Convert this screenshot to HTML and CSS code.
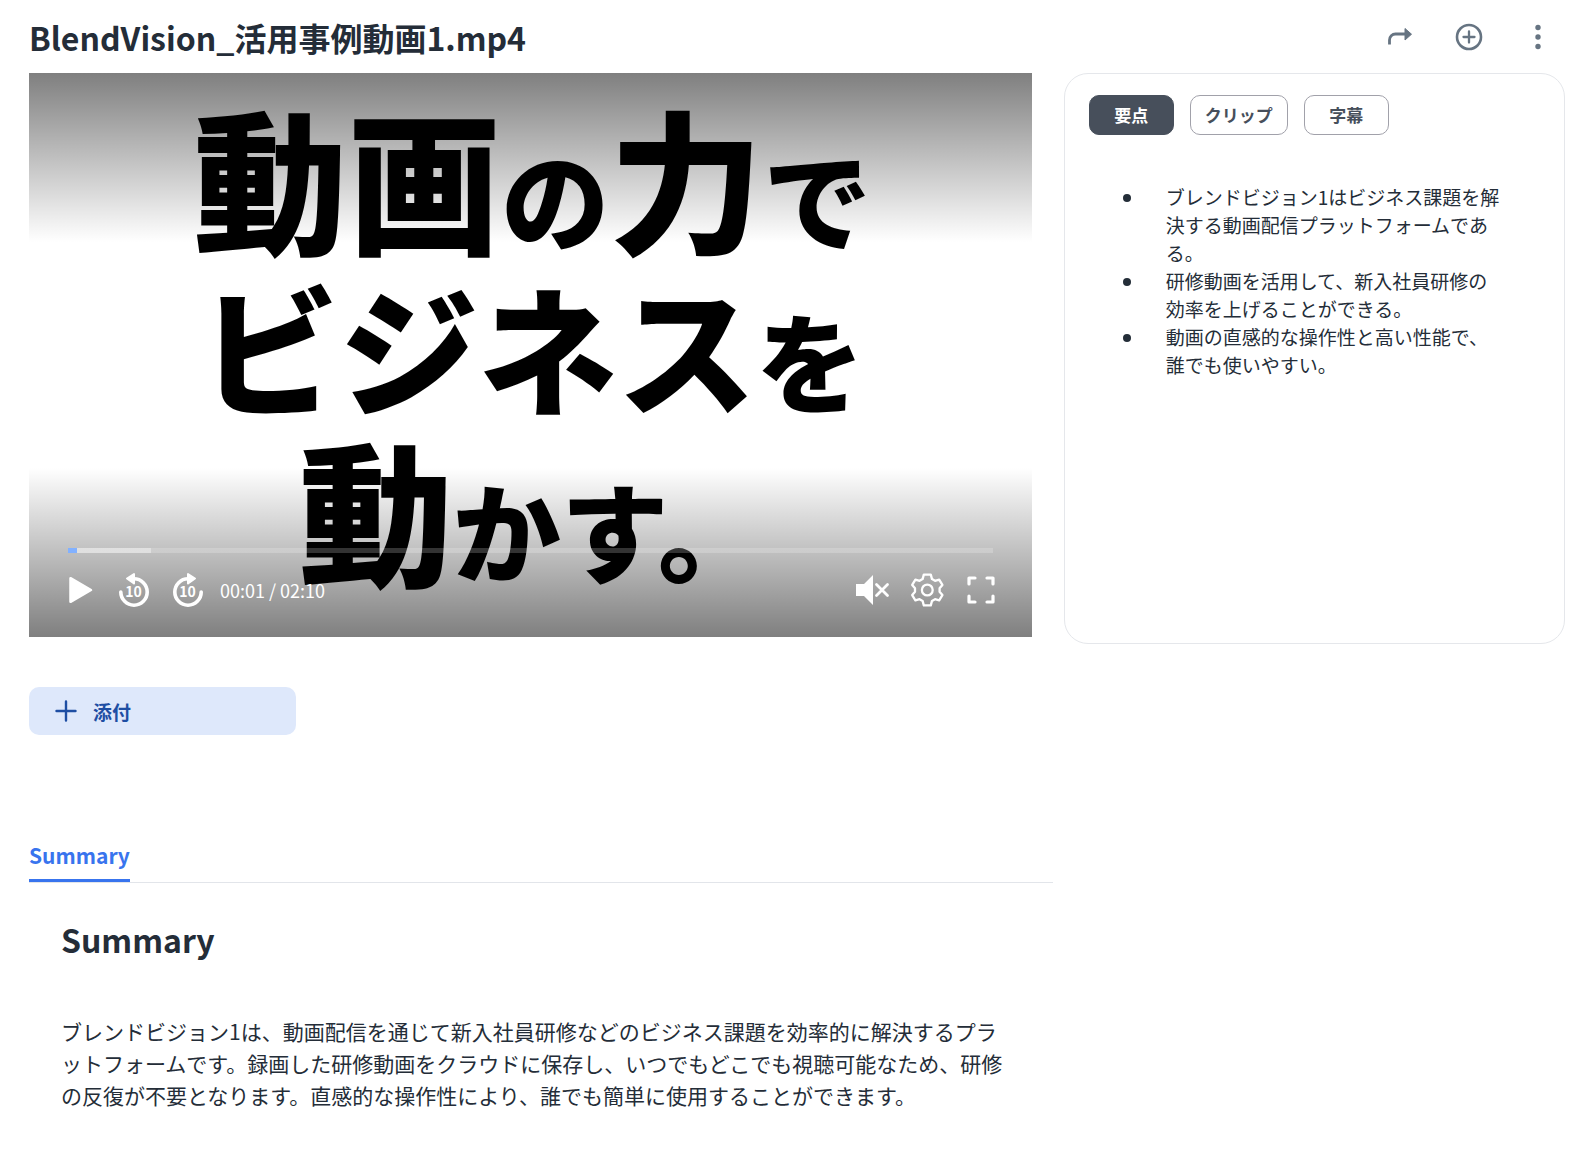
FILE: index.html
```html
<!DOCTYPE html>
<html lang="ja">
<head>
    <meta charset="UTF-8">
    <meta name="viewport" content="width=device-width, initial-scale=1.0">
    <title>BlendVision_活用事例動画1.mp4</title>
    <link rel="stylesheet" href="styles.css">
</head>
<body>

    <header class="page-header">
        <h1>BlendVision_活用事例動画1.mp4</h1>
        <div class="header-actions">
            <button type="button" aria-label="共有">
                <svg width="28" height="28" viewBox="0 0 28 28">
                    <path d="M3.5 21.5V17a6 6 0 0 1 6-6H19" fill="none" stroke="currentColor" stroke-width="2.8"/>
                    <path d="M19 5.5l6.5 5.7L19 17z" fill="currentColor" stroke="currentColor" stroke-width="1" stroke-linejoin="round"/>
                </svg>
            </button>
            <button type="button" aria-label="追加">
                <svg width="28" height="28" viewBox="0 0 28 28" fill="none" stroke="currentColor" stroke-width="2.6">
                    <circle cx="14" cy="14" r="12"/>
                    <path d="M14 8.5v11M8.5 14h11" stroke-linecap="round" stroke-width="2.3"/>
                </svg>
            </button>
            <button type="button" aria-label="メニュー">
                <svg width="28" height="28" viewBox="0 0 28 28" fill="currentColor">
                    <circle cx="14" cy="4.5" r="2.7"/>
                    <circle cx="14" cy="14" r="2.7"/>
                    <circle cx="14" cy="23.5" r="2.7"/>
                </svg>
            </button>
        </div>
    </header>

    <main class="main">
        <div class="player">
            <div class="frame">
                <p class="kanji">動画<span class="small">の</span>力<span class="small">で</span></p>
                <p class="kana">ビジネス<span class="small">を</span></p>
                <p class="kanji">動<span class="small">かす。</span></p>
            </div>
            <div class="controls">
                <input class="seek" type="range" min="0" max="130" value="1" aria-label="再生位置">
                <div class="control-row">
                    <button type="button" aria-label="再生">
                        <svg width="34" height="36" viewBox="0 0 34 36">
                            <path d="M7.5 6.2v23.6L28 18z" fill="#fff" stroke="#fff" stroke-width="2.5" stroke-linejoin="round"/>
                        </svg>
                    </button>
                    <button type="button" aria-label="10秒戻る">
                        <svg width="34" height="36" viewBox="0 0 34 36">
                            <path d="M3.8 20A13.2 13.2 0 1 0 17 6.8" fill="none" stroke="#fff" stroke-width="3.6" stroke-linecap="round"/>
                            <path d="M10 6.5L17 2v9.5z" fill="#fff" stroke="#fff" stroke-width="2" stroke-linejoin="round"/>
                            <text class="skip-label" x="16.5" y="25" text-anchor="middle">10</text>
                        </svg>
                    </button>
                    <button type="button" aria-label="10秒進む">
                        <svg width="34" height="36" viewBox="0 0 34 36">
                            <path d="M30.2 20A13.2 13.2 0 1 1 17 6.8" fill="none" stroke="#fff" stroke-width="3.6" stroke-linecap="round"/>
                            <path d="M24 6.5L17 2v9.5z" fill="#fff" stroke="#fff" stroke-width="2" stroke-linejoin="round"/>
                            <text class="skip-label" x="16.5" y="25" text-anchor="middle">10</text>
                        </svg>
                    </button>
                    <span class="time">00:01 / 02:10</span>
                    <button type="button" class="push" aria-label="ミュート解除">
                        <svg width="34" height="36" viewBox="0 0 34 36">
                            <path d="M0 12h8l9-9v30l-9-9H0z" fill="#fff"/>
                            <path d="M20.500 12.500l11 11M31.500 12.500l-11 11" stroke="#fff" stroke-width="2.8" stroke-linecap="round"/>
                        </svg>
                    </button>
                    <button type="button" aria-label="設定">
                        <svg width="34" height="36" viewBox="0 0 34 36" fill="none" stroke="#fff" stroke-width="2.3" stroke-linejoin="round">
                            <path d="M13.8 2.600h7l1.200 4.500 3 1.700 4.200-1.200 3.200 5.300-2.800 3.400v3.400l2.800 3.400-3.200 5.300-4.200-1.200-3 1.700-1.200 4.500h-7l-1.200-4.500-3-1.700-4.200 1.200-3.200-5.300 2.800-3.400v-3.400l-2.800-3.400 3.200-5.300 4.200 1.200 3-1.700z"/>
                            <circle cx="17.300" cy="18" r="5.400"/>
                        </svg>
                    </button>
                    <button type="button" aria-label="全画面">
                        <svg width="34" height="36" viewBox="0 0 34 36" fill="none" stroke="#fff" stroke-width="3.2" stroke-linecap="round" stroke-linejoin="round">
                            <path d="M5 12V6h6M23 6h6v6M29 24v6h-6M11 30H5v-6"/>
                        </svg>
                    </button>
                </div>
            </div>
        </div>

        <aside class="panel">
            <div class="pills">
                <button type="button" class="pill active">要点</button>
                <button type="button" class="pill">クリップ</button>
                <button type="button" class="pill">字幕</button>
            </div>
            <ul class="points">
                <li>ブレンドビジョン1はビジネス課題を解決する動画配信プラットフォームである。</li>
                <li>研修動画を活用して、新入社員研修の効率を上げることができる。</li>
                <li>動画の直感的な操作性と高い性能で、誰でも使いやすい。</li>
            </ul>
        </aside>
    </main>

    <button type="button" class="attach">
        <svg width="24" height="24" viewBox="0 0 24 24" fill="none" stroke="currentColor" stroke-width="2.4" stroke-linecap="round">
            <path d="M12 2.5v19M2.5 12h19"/>
        </svg>
        添付
    </button>

    <section class="details">
        <nav class="tabs">
            <a class="tab" href="#summary">Summary</a>
        </nav>
        <div class="summary" id="summary">
            <h2>Summary</h2>
            <p>ブレンドビジョン1は、動画配信を通じて新入社員研修などのビジネス課題を効率的に解決するプラットフォームです。録画した研修動画をクラウドに保存し、いつでもどこでも視聴可能なため、研修の反復が不要となります。直感的な操作性により、誰でも簡単に使用することができます。</p>
        </div>
    </section>

</body>
</html>
```
FILE: styles.css
```css
* {
    box-sizing: border-box;
}

body {
    margin: 0;
    padding: 16px 7px 48px 29px;
    font-family: "Noto Sans CJK JP", sans-serif;
    color: #242d38;
    background-color: #fff;
}

h1, h2, p, ul {
    margin: 0;
}

button {
    padding: 0;
    border: none;
    background: none;
    font-family: inherit;
    color: inherit;
    cursor: pointer;
}

svg {
    display: block;
}

/* Header */
.page-header {
    display: flex;
    justify-content: space-between;
    align-items: flex-start;
    height: 57px;
    padding-right: 13px;
}

h1 {
    font-size: 32px;
    line-height: 42px;
    font-weight: 700;
}

.header-actions {
    display: flex;
    gap: 41px;
    padding-top: 7px;
    color: #667482;
}

/* Player and side panel */
.main {
    display: grid;
    grid-template-columns: 2fr 1fr;
    gap: 32px;
    align-items: start;
}

.player {
    position: relative;
    aspect-ratio: 16 / 9;
    overflow: hidden;
    background-color: #fff;
}

.frame {
    padding: 23px 0 0 4px;
    color: #000;
    font-weight: 900;
    text-align: center;
    white-space: nowrap;
}

.kanji {
    font-size: 154px;
    line-height: 160px;
}

.kana {
    padding-top: 6px;
    font-size: 139px;
    line-height: 166px;
}

.frame .small {
    font-size: 108px;
    line-height: 1;
}

/* Shade at the top and bottom, with the controls on it */
.controls {
    position: absolute;
    inset: 0;
    display: flex;
    flex-direction: column;
    justify-content: flex-end;
    gap: 19px;
    padding: 0 34px 29px 34px;
    background: linear-gradient(rgba(0, 0, 0, 0.5), transparent 30%, transparent 70%, rgba(0, 0, 0, 0.5));
}

.seek {
    appearance: none;
    height: 5px;
    margin: 0 5px;
    background: linear-gradient(90deg, #82b1ff 1%, rgba(255, 255, 255, 0.5) 1%, rgba(255, 255, 255, 0.5) 9%, rgba(255, 255, 255, 0.2) 9%);
}

.seek::-webkit-slider-thumb {
    appearance: none;
    width: 0;
    height: 5px;
}

.control-row {
    display: flex;
    align-items: center;
    gap: 20px;
}

.time {
    margin-left: -5px;
    color: #fff;
    font-size: 18px;
    line-height: 28px;
}

.skip-label {
    fill: #fff;
    font-size: 14px;
    font-weight: 700;
}

.push {
    margin-left: auto;
}

.panel {
    height: 571px;
    padding: 21px 24px;
    border: 1px solid #e5e7eb;
    border-radius: 24px;
}

.pills {
    display: flex;
    gap: 16px;
}

.pill {
    min-width: 85px;
    height: 40px;
    padding: 0 14px 2px;
    border: 1px solid #a1a1aa;
    border-radius: 10px;
    font-size: 17px;
    font-weight: 700;
    color: #474f5b;
}

.pill.active {
    border-color: #474f5b;
    background-color: #474f5b;
    color: #fff;
}

.points {
    padding: 48px 34px 0 77px;
    list-style: none;
    font-size: 19px;
    line-height: 28px;
}

.points li {
    position: relative;
}

.points li::before {
    content: "";
    position: absolute;
    left: -43px;
    top: 11px;
    width: 8px;
    height: 8px;
    border-radius: 50%;
    background-color: #242d38;
}

.attach {
    display: flex;
    align-items: center;
    gap: 15px;
    width: 267px;
    height: 48px;
    margin-top: 43px;
    padding: 0 25px;
    border-radius: 10px;
    background-color: #dee8fb;
    color: #1e4ea3;
    font-size: 19px;
    font-weight: 700;
}

/* Summary */
.details {
    width: calc(100% * 2 / 3);
    margin-top: 104px;
}

.tabs {
    display: flex;
    border-bottom: 1px solid #e2e5ea;
}

.tab {
    padding-bottom: 8px;
    border-bottom: 3px solid #3874ee;
    color: #3874ee;
    font-size: 21px;
    line-height: 32px;
    font-weight: 700;
    text-decoration: none;
}

.summary {
    padding: 32px 40px 0 32px;
}

h2 {
    font-size: 32px;
    line-height: 48px;
    font-weight: 700;
}

.summary p {
    margin-top: 52px;
    font-size: 21px;
    line-height: 32px;
}
```
